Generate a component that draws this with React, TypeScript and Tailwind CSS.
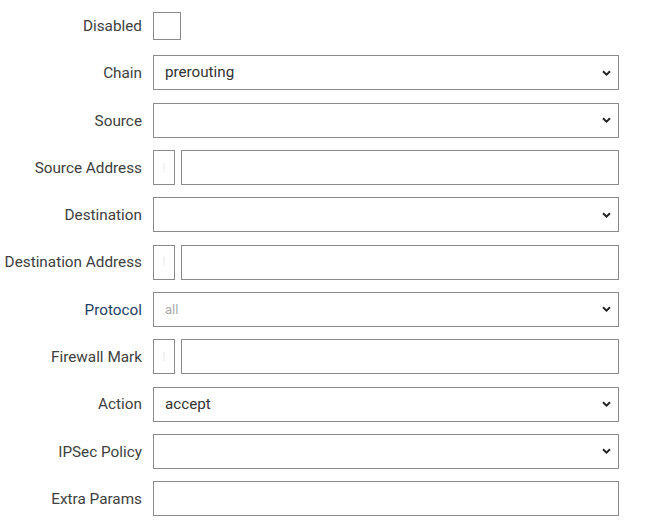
import React from 'react';

// Row definitions for the rule form
type Field =
  | { label: string; kind: 'checkbox' }
  | { label: string; kind: 'select'; value?: string; placeholder?: string; highlight?: boolean }
  | { label: string; kind: 'negatable' }
  | { label: string; kind: 'text' };

const fields: Field[] = [
  { label: 'Disabled', kind: 'checkbox' },
  { label: 'Chain', kind: 'select', value: 'prerouting' },
  { label: 'Source', kind: 'select' },
  { label: 'Source Address', kind: 'negatable' },
  { label: 'Destination', kind: 'select' },
  { label: 'Destination Address', kind: 'negatable' },
  { label: 'Protocol', kind: 'select', placeholder: 'all', highlight: true },
  { label: 'Firewall Mark', kind: 'negatable' },
  { label: 'Action', kind: 'select', value: 'accept' },
  { label: 'IPSec Policy', kind: 'select' },
  { label: 'Extra Params', kind: 'text' },
];

const Chevron = () => (
  <svg width="9" height="6" viewBox="0 0 9 6" className="absolute right-[7px] top-1/2 -translate-y-1/2">
    <path d="M1 1.2 L4.5 4.6 L8 1.2" fill="none" stroke="#222" strokeWidth="1.9" />
  </svg>
);

function Control({ field }: { field: Field }) {
  switch (field.kind) {
    case 'checkbox':
      return <div className="w-[28px] h-[28px] border border-[#8a8a8a] bg-white" />;
    case 'select':
      return (
        <div className="relative w-[466px] h-[35px] border border-[#8a8a8a] bg-white flex items-center pl-[11px]">
          {field.value && <span className="text-[15.2px] text-[#333]">{field.value}</span>}
          {field.placeholder && <span className="text-[13px] text-[#aaa]">{field.placeholder}</span>}
          <Chevron />
        </div>
      );
    case 'negatable':
      return (
        <div className="flex gap-[6px]">
          <div className="w-[22px] h-[35px] border border-[#8a8a8a] bg-white flex items-center justify-center">
            <span className="text-[13px] text-[#ececec]">!</span>
          </div>
          <div className="w-[438px] h-[35px] border border-[#8a8a8a] bg-white" />
        </div>
      );
    default:
      return <div className="w-[466px] h-[35px] border border-[#8a8a8a] bg-white" />;
  }
}

export default function App() {
  return (
    <div className="w-[648px] h-[531px] bg-white pt-[8px] font-['Roboto',sans-serif]">
      <div className="flex flex-col gap-[12.33px]">
        {fields.map((field) => (
          <div key={field.label} className="flex items-center h-[35px]">
            <div
              className={`w-[142px] mt-[2px] text-right text-[15.3px] leading-none ${
                field.kind === 'select' && field.highlight ? 'text-[#1f3f66]' : 'text-[#404040]'
              }`}
            >
              {field.label}
            </div>
            <div className="ml-[11px]">
              <Control field={field} />
            </div>
          </div>
        ))}
      </div>
    </div>
  );
}
